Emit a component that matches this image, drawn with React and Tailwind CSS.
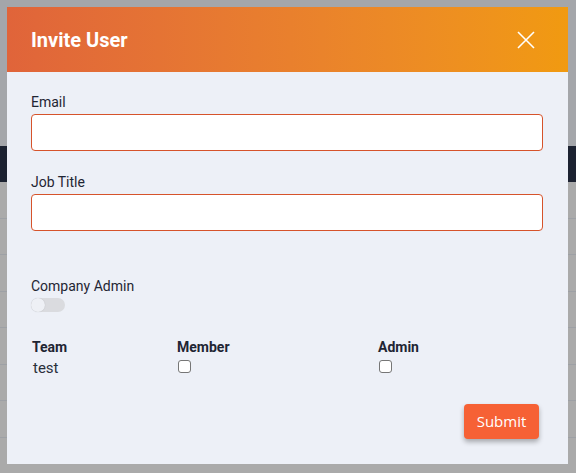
export default function App() {
  return (
    <div className="relative h-[473px] w-[576px] overflow-hidden bg-[#aaaaaa]" style={{ fontFamily: "Roboto, 'Liberation Sans', sans-serif" }}>
      <div className="h-[146px] bg-[#a4a6aa]" />
      <div className="h-[36px] bg-[#1c2231]" />
      <div className="flex flex-col">
        {[0, 1, 2, 3, 4, 5, 6].map((i) => (
          <div key={i} className="h-[36.5px] border-b border-[#9da0a5]" />
        ))}
      </div>

      <div className="absolute left-[7px] top-[7px] flex h-[457px] w-[561px] flex-col bg-[#edf0f7]">
        <div className="flex h-[65px] items-center justify-between bg-gradient-to-r from-[#e0643a] to-[#f19a10] pl-[24px] pr-[32px]">
          <h2 className="text-[20px] font-bold text-white">Invite User</h2>
          <svg width="20" height="20" viewBox="0 0 20 20" className="text-white">
            <path d="M2 2 L18 18 M18 2 L2 18" stroke="currentColor" strokeWidth="1.6" fill="none" />
          </svg>
        </div>
        <div className="flex flex-col px-[24px] pt-[22px]">
          <label className="text-[14px] font-normal leading-[16px] text-[#1f2533]">Email</label>
          <div className="mt-[4px] h-[37px] w-[512px] rounded-[4px] border border-[#d6532b] bg-white" />
          <label className="mt-[23px] text-[14px] font-normal leading-[16px] text-[#1f2533]">Job Title</label>
          <div className="mt-[4px] h-[37px] w-[512px] rounded-[4px] border border-[#d6532b] bg-white" />
          <label className="mt-[47px] text-[14px] font-normal leading-[16px] text-[#1f2533]">Company Admin</label>
          <div className="mt-[4px] flex h-[14px] w-[34px] items-center rounded-full bg-[#dadbdf]">
            <div className="h-[14px] w-[14px] rounded-full bg-[#eef0f5] shadow-[0_0_1px_rgba(0,0,0,0.2)]" />
          </div>
          <div className="mt-[27px] grid grid-cols-[145px_201px_1fr] pl-[1px] text-[#1f2533]">
            <div className="text-[14px] font-bold leading-[16px]">Team</div>
            <div className="text-[14px] font-bold leading-[16px]">Member</div>
            <div className="text-[14px] font-bold leading-[16px]">Admin</div>
            <div className="mt-[4px] pl-[1px] text-[15px] leading-[18px] text-[#2a2f3a]">test</div>
            <div className="mt-[5px] pl-[1px]">
              <div className="h-[13px] w-[13px] rounded-[3px] border border-[#767676] bg-white" />
            </div>
            <div className="mt-[5px] pl-[1px]">
              <div className="h-[13px] w-[13px] rounded-[3px] border border-[#767676] bg-white" />
            </div>
          </div>
          <div className="mt-[27px] flex justify-end pr-[5px]">
            <button className="h-[35px] w-[75px] rounded-[4px] bg-[#f66135] text-[15px] text-white shadow-[0_3px_5px_rgba(0,0,0,0.3)]" style={{ fontFamily: "'Open Sans', sans-serif" }}>
              Submit
            </button>
          </div>
        </div>
      </div>
    </div>
  );
}
